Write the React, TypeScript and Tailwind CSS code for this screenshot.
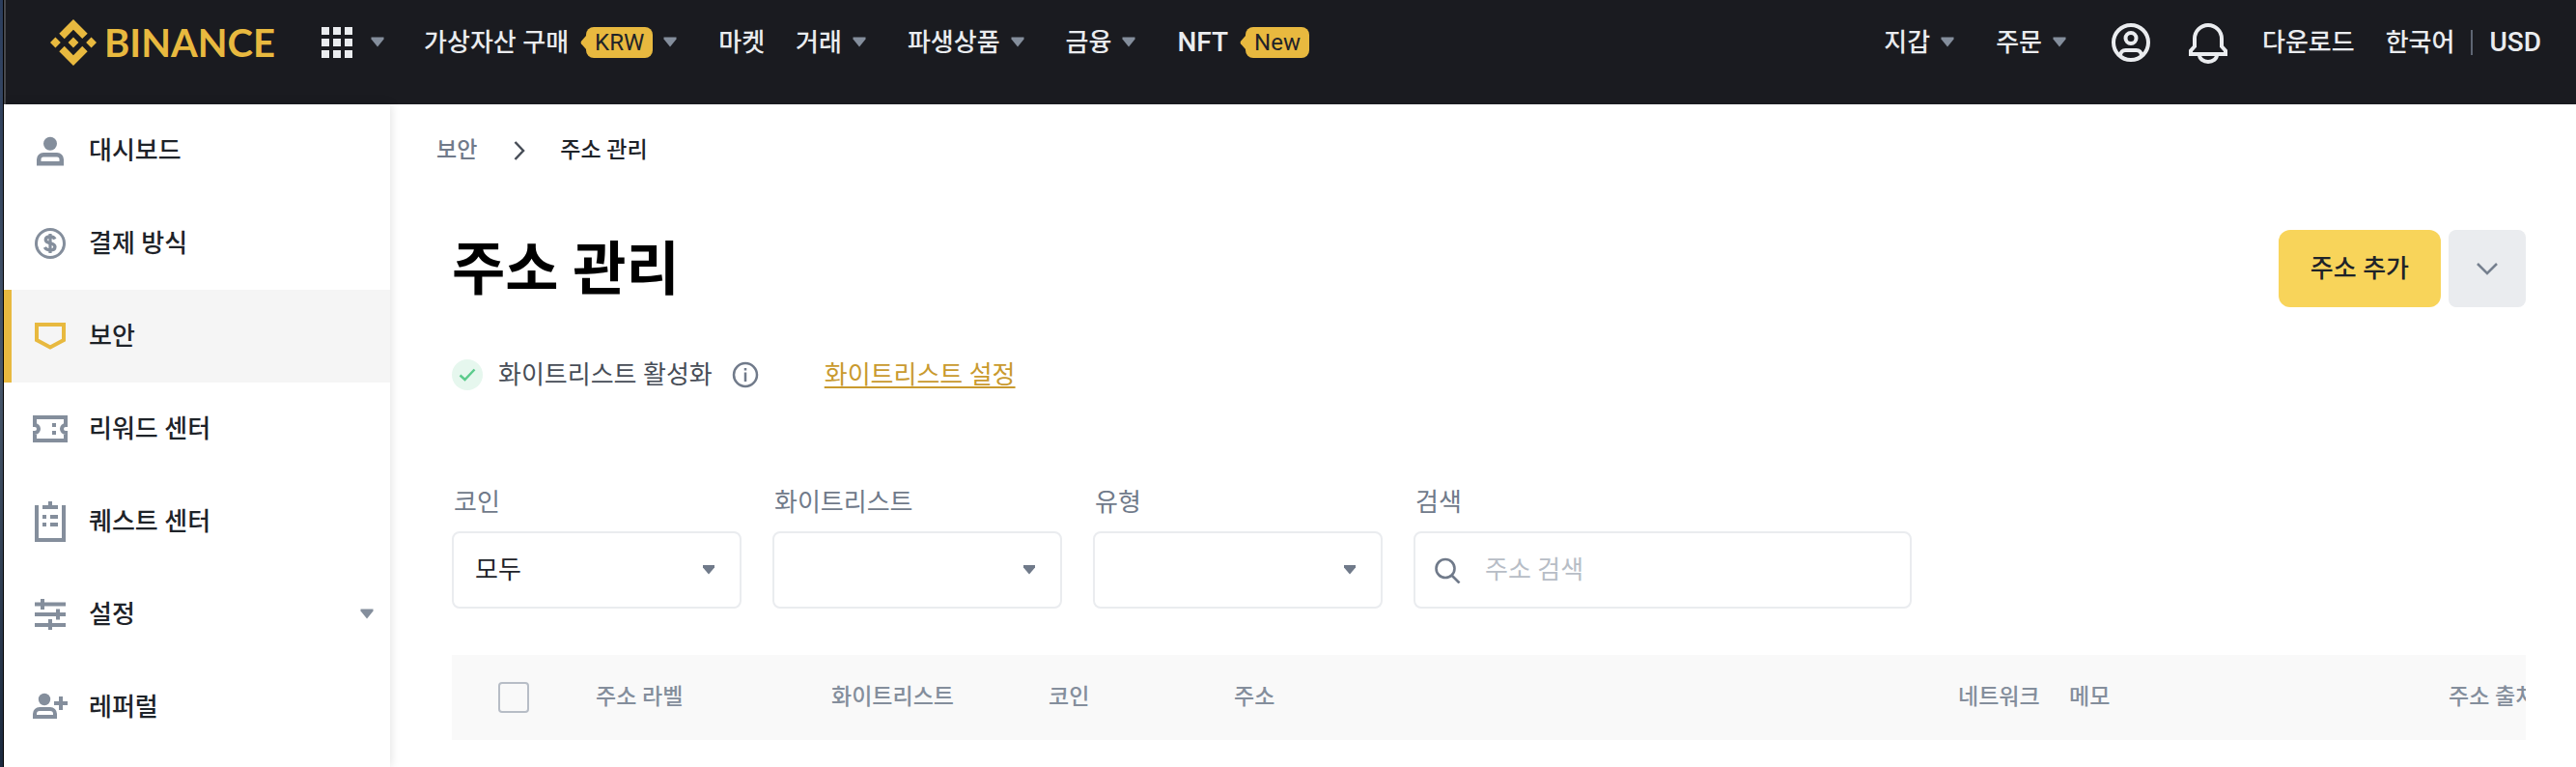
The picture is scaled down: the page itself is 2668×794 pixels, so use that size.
import type { ReactNode } from "react";

function Caret({ className = "" }: { className?: string }) {
  return (
    <svg viewBox="0 0 32 32" className={`h-8 w-8 shrink-0 text-[#848e9c] ${className}`} fill="currentColor" aria-hidden>
      <path d="M9.500 10.500h13v2l-6.500 8-6.500-8z" />
    </svg>
  );
}

function BinanceMark() {
  return (
    <svg viewBox="0 0 24 24" className="h-12 w-12" fill="currentColor" aria-hidden>
      <path d="M16.624 13.9202l2.7175 2.7154-7.353 7.353-7.353-7.352 2.7175-2.7164 4.6355 4.6595 4.6356-4.6595zm4.6366-4.6366L24 12l-2.7154 2.7164L18.5682 12l2.6924-2.7164zm-9.272.001l2.7163 2.6914-2.7164 2.7174v-.001L9.2721 12l2.7164-2.7154zm-9.2722-.001L5.4088 12l-2.6914 2.6924L0 12l2.7164-2.7164zM11.9885.0115l7.353 7.329-2.7174 2.7154-4.6356-4.6356-4.6355 4.6595-2.7174-2.7154 7.353-7.353z" />
    </svg>
  );
}

function AppsIcon() {
  return (
    <svg viewBox="0 0 32 32" className="h-8 w-8" fill="currentColor" aria-hidden>
      {[0, 12, 24].map((y) =>
        [0, 12, 24].map((x) => <rect key={`${x}-${y}`} x={x} y={y} width="8" height="8" />)
      )}
    </svg>
  );
}

function UserCircleIcon() {
  return (
    <svg viewBox="0 0 48 48" className="h-12 w-12" fill="none" stroke="currentColor" strokeWidth="4" aria-hidden>
      <circle cx="24" cy="24" r="18" />
      <circle cx="24" cy="19.5" r="5.5" />
      <path d="M13 38c0-4 2.500-6 5.500-6h11c3 0 5.500 2 5.500 6" />
    </svg>
  );
}

function BellIcon() {
  return (
    <svg viewBox="0 0 48 48" className="h-12 w-12" fill="none" stroke="currentColor" strokeWidth="4" aria-hidden>
      <path d="M6 36v-3.500l4-4.500V20a14 14 0 0 1 28 0v8l4 4.500V36z" />
      <path d="M15 37a9 7 0 0 0 18 0" />
    </svg>
  );
}

function MenuIcon({ children }: { children: ReactNode }) {
  return (
    <svg viewBox="0 0 40 44" className="h-11 w-10 shrink-0" fill="none" stroke="currentColor" strokeWidth="4" aria-hidden>
      {children}
    </svg>
  );
}

const menuItems = [
  {
    label: "대시보드",
    icon: (
      <g fill="currentColor" stroke="none">
        <circle cx="20" cy="14.700" r="7" />
        <path fillRule="evenodd" d="M6 37.500V31a7 7 0 0 1 7-7h14a7 7 0 0 1 7 7v6.500zM10.500 33h19v-2a2.500 2.500 0 0 0-2.500-2.500H13a2.500 2.500 0 0 0-2.500 2.500z" />
      </g>
    ),
  },
  {
    label: "결제 방식",
    icon: (
      <>
        <circle cx="20" cy="22" r="14.500" strokeWidth="3" />
        <path strokeWidth="3.400" d="M25 17.500c-1-1.800-2.700-2.500-5-2.500-3 0-4.700 1.300-4.700 3.300 0 4.900 9.600 2.200 9.600 7.100 0 2.200-1.900 3.500-4.900 3.500-2.500 0-4.500-.900-5.700-2.900" />
        <path strokeWidth="3.200" d="M20 12v20" />
      </>
    ),
  },
  { label: "보안", active: true, icon: <path d="M6 10h28v16l-14 7.500L6 26z" /> },
  {
    label: "리워드 센터",
    icon: (
      <>
        <path d="M4 10h32v8a4 4 0 0 0 0 8v8H4v-8a4 4 0 0 0 0-8z" />
        <path d="M22 18h4M22 26h4" />
      </>
    ),
  },
  {
    label: "퀘스트 센터",
    icon: (
      <>
        <path d="M6 5v36h28V5" />
        <path d="M12 7h16M20 1v6M12 17h4M20 17h8M12 25h4M20 25h8" />
      </>
    ),
  },
  {
    label: "설정",
    expandable: true,
    icon: <path d="M4 11.500h32M4 22h32M4 33h32M12 6v11M28 16.500v11M20 27v11" />,
  },
  {
    label: "레퍼럴",
    icon: (
      <>
        <g fill="currentColor" stroke="none">
          <circle cx="14" cy="14" r="6.200" />
          <path fillRule="evenodd" d="M2 34v-5a7 7 0 0 1 7-7h11a7 7 0 0 1 7 7v5zM6 30h17v-1a3 3 0 0 0-3-3H9a3 3 0 0 0-3 3z" />
        </g>
        <path d="M24 18h14M31 11v14" />
      </>
    ),
  },
];

function Badge({ children }: { children: ReactNode }) {
  return (
    <span className="ml-3 flex items-center">
      <svg viewBox="0 0 6 14" className="h-[14px] w-[6px] text-[#e8b93f]" fill="currentColor" aria-hidden>
        <path d="M6 0v14L1 8.200a2 2 0 0 1 0-2.400z" />
      </svg>
      <span className="flex h-8 items-center rounded-lg bg-[#e8b93f] px-[9px] text-2xl font-normal text-[#1e2329]">
        {children}
      </span>
    </span>
  );
}

function NavItem({ label, badge, caret }: { label: string; badge?: string; caret?: boolean }) {
  return (
    <a href="#" className="flex items-center whitespace-nowrap">
      {label}
      {badge && <Badge>{badge}</Badge>}
      {caret && <Caret className="mx-[2px]" />}
    </a>
  );
}

function Header() {
  return (
    <header className="flex h-[108px] items-center justify-between border-l-2 border-[#47484c] bg-[#1a1b20] pb-5 pl-[46px] pr-9 text-[26px] font-medium text-[#eaecef]">
      <div className="flex items-center">
        <a href="#" className="mr-12 flex items-center gap-2 text-[#e8b93f]" aria-label="BINANCE">
          <BinanceMark />
          <span className="font-[Lato,sans-serif] text-[40px] leading-none font-bold">BINANCE</span>
        </a>
        <button type="button" className="flex items-center gap-[10px]" aria-label="Apps">
          <AppsIcon />
          <Caret />
        </button>
        <nav className="ml-8 flex items-center gap-8">
          <NavItem label="가상자산 구매" badge="KRW" caret />
          <NavItem label="마켓" />
          <NavItem label="거래" caret />
          <NavItem label="파생상품" caret />
          <NavItem label="금융" caret />
          <a href="#" className="flex items-center text-[28px]">
            NFT
            <Badge>New</Badge>
          </a>
        </nav>
      </div>
      <div className="flex items-center gap-8">
        <NavItem label="지갑" caret />
        <NavItem label="주문" caret />
        <button type="button" aria-label="Account">
          <UserCircleIcon />
        </button>
        <button type="button" aria-label="Notifications">
          <BellIcon />
        </button>
        <NavItem label="다운로드" />
        <div className="flex items-center gap-[17px]">
          <NavItem label="한국어" />
          <span className="h-[26px] w-[2px] bg-[#5e6673]" />
          <a href="#" className="text-[28px]">USD</a>
        </div>
      </div>
    </header>
  );
}

function Sidebar() {
  return (
    <aside className="w-[400px] shrink-0 bg-white shadow-[0_0_10px_rgba(0,0,0,0.14)]">
      <ul>
        {menuItems.map((item) => (
          <li key={item.label}>
            <a
              href="#"
              className={`flex h-24 items-center border-l-8 pr-2 pl-5 text-[26px] font-medium text-[#1e2329] ${
                item.active ? "border-[#e8b93f] bg-[#f5f5f5]" : "border-transparent"
              }`}
            >
              <span className={item.active ? "text-[#e8b93f]" : "text-[#848e9c]"}>
                <MenuIcon>{item.icon}</MenuIcon>
              </span>
              <span className="ml-5 flex-1">{item.label}</span>
              {item.expandable && <Caret />}
            </a>
          </li>
        ))}
      </ul>
    </aside>
  );
}

function SelectField({ id, label, options }: { id: string; label: string; options: string[] }) {
  return (
    <div className="flex w-[300px] flex-col gap-[10px]">
      <label htmlFor={id} className="pl-[2px] text-[26px] leading-10 text-[#707a8a]">
        {label}
      </label>
      <div className="relative">
        <select
          id={id}
          className="h-20 w-full appearance-none rounded-lg border-2 border-[#eaecef] bg-white px-[22px] text-[26px] text-[#1e2329]"
        >
          {options.map((option) => (
            <option key={option}>{option}</option>
          ))}
        </select>
        <svg
          viewBox="0 0 12 10"
          className="pointer-events-none absolute top-[35px] right-7 h-[10px] w-3 text-[#707a8a]"
          fill="currentColor"
          aria-hidden
        >
          <path d="M0 0h12v2.500L6 9.500 0 2.500z" />
        </svg>
      </div>
    </div>
  );
}

function Filters() {
  return (
    <div className="mt-[92px] flex gap-8">
      <SelectField id="coin" label="코인" options={["모두"]} />
      <SelectField id="whitelist" label="화이트리스트" options={[""]} />
      <SelectField id="type" label="유형" options={[""]} />
      <div className="flex w-[516px] flex-col gap-[10px]">
        <label htmlFor="search" className="pl-[2px] text-[26px] leading-10 text-[#707a8a]">
          검색
        </label>
        <div className="flex h-20 items-center gap-6 rounded-lg border-2 border-[#eaecef] px-5">
          <svg viewBox="0 0 28 28" className="h-7 w-7 shrink-0 text-[#707a8a]" fill="none" stroke="currentColor" strokeWidth="2.600" aria-hidden>
            <circle cx="11" cy="12.500" r="9.500" />
            <path d="M17.500 19.500l8 8" />
          </svg>
          <input
            id="search"
            type="text"
            placeholder="주소 검색"
            className="min-w-0 flex-1 text-[26px] outline-none placeholder:text-[#b7bdc6]"
          />
        </div>
      </div>
    </div>
  );
}

function AddressTable() {
  return (
    <div className="mt-12 overflow-hidden">
      <table className="w-[2308px] min-w-full table-fixed bg-[#f9f9f9] text-left text-[23px] text-[#848e9c]">
        <thead>
          <tr className="h-[88px]">
            <th className="w-[149px] pl-12">
              <input
                type="checkbox"
                aria-label="모두"
                className="block h-8 w-8 appearance-none rounded border-2 border-[#b7bdc6]"
              />
            </th>
            <th className="w-[244px] font-medium">주소 라벨</th>
            <th className="w-[225px] font-medium">화이트리스트</th>
            <th className="w-[192px] font-medium">코인</th>
            <th className="w-[750px] font-medium">주소</th>
            <th className="w-[115px] font-medium">네트워크</th>
            <th className="w-[393px] font-medium">메모</th>
            <th className="font-medium">주소 출처</th>
          </tr>
        </thead>
      </table>
    </div>
  );
}

function AddressManagement() {
  return (
    <main className="min-w-0 flex-1 pr-[52px] pl-12">
      <nav className="flex h-24 items-center text-[23px] font-medium">
        <a href="#" className="text-[#707a8a]">보안</a>
        <svg viewBox="0 0 12 20" className="mr-9 ml-[38px] h-5 w-3 text-[#474d57]" fill="none" stroke="currentColor" strokeWidth="2.500" aria-hidden>
          <path d="M1.500 1l8.500 9-8.500 9" />
        </svg>
        <span className="text-[#1e2329]">주소 관리</span>
      </nav>

      <div className="pl-4">
        <div className="mt-[30px] flex items-center justify-between">
          <h1 className="pt-1 text-[60px] leading-[84px] font-bold text-black">주소 관리</h1>
          <div className="flex gap-2">
            <button type="button" className="h-20 rounded-xl bg-[#f8d45a] px-[33px] text-[26px] font-medium text-[#1e2329]">
              주소 추가
            </button>
            <button type="button" className="flex h-20 w-20 items-center justify-center rounded-lg bg-[#eaecef]" aria-label="More">
              <svg viewBox="0 0 22 13" className="h-[13px] w-[22px] text-[#76808f]" fill="none" stroke="currentColor" strokeWidth="2.500" aria-hidden>
                <path d="M1 1l10 10L21 1" />
              </svg>
            </button>
          </div>
        </div>

        <div className="mt-[46px] flex h-10 items-center text-[26px]">
          <svg viewBox="0 0 32 32" className="h-8 w-8" fill="none" aria-hidden>
            <circle cx="16" cy="16" r="16" fill="#e6f7ee" />
            <path d="M8.500 16.500l5 4.500 10-10.500" stroke="#5ccb8c" strokeWidth="2.500" />
          </svg>
          <span className="ml-4 text-[#474d57]">화이트리스트 활성화</span>
          <svg viewBox="0 0 28 28" className="ml-5 h-7 w-7 text-[#707a8a]" fill="none" stroke="currentColor" strokeWidth="2.500" aria-hidden>
            <circle cx="14" cy="14" r="12" />
            <path d="M14 11.500V21M14 7v2.500" />
          </svg>
          <a href="#" className="ml-[68px] text-[#c99a2e] underline decoration-2 underline-offset-[3px]">
            화이트리스트 설정
          </a>
        </div>

        <Filters />
        <AddressTable />
      </div>
    </main>
  );
}

export default function App() {
  return (
    <div className="flex min-h-screen bg-white font-[Roboto,'Noto_Sans_CJK_KR',sans-serif]">
      <div className="w-1 shrink-0 border-r border-black bg-linear-to-b from-[#2b3d5c] via-[#4a5a6e] to-[#1d2c42]" />
      <div className="flex min-w-0 flex-1 flex-col">
        <Header />
        <div className="flex flex-1">
          <Sidebar />
          <AddressManagement />
        </div>
      </div>
    </div>
  );
}
